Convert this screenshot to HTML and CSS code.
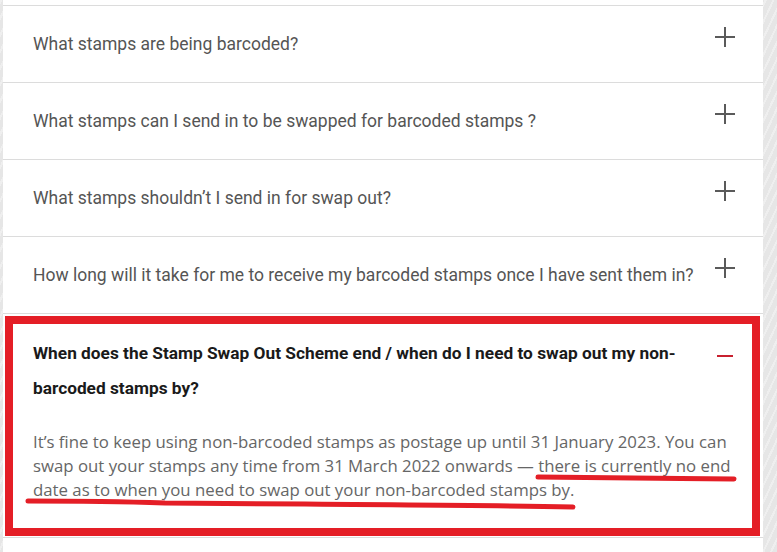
FILE: index.html
```html
<!DOCTYPE html>
<html lang="en">
<head>
    <meta charset="UTF-8">
    <meta name="viewport" content="width=device-width, initial-scale=1.0">
    <title>Stamp Swap Out FAQ</title>
    <link rel="stylesheet" href="styles.css">
</head>
<body>
    <div class="faq">
        <div class="faq-item">
            <span class="faq-question">What stamps are being barcoded?</span>
            <span class="faq-plus"></span>
        </div>
        <div class="faq-item">
            <span class="faq-question">What stamps can I send in to be swapped for barcoded stamps ?</span>
            <span class="faq-plus"></span>
        </div>
        <div class="faq-item">
            <span class="faq-question">What stamps shouldn’t I send in for swap out?</span>
            <span class="faq-plus"></span>
        </div>
        <div class="faq-item">
            <span class="faq-question">How long will it take for me to receive my barcoded stamps once I have sent them in?</span>
            <span class="faq-plus"></span>
        </div>
        <div class="faq-item open">
            <div class="faq-box">
                <div class="faq-head">
                    <span class="faq-title">When does the Stamp Swap Out Scheme end / when do I need to swap out my non-barcoded stamps by?</span>
                    <span class="faq-minus"></span>
                </div>
                <p class="faq-answer">It’s fine to keep using non-barcoded stamps as postage up until 31 January 2023. You can swap out your stamps any time from 31 March 2022 onwards — there is currently no end date as to when you need to swap out your non-barcoded stamps by.</p>
                <!-- hand drawn marks on top of the text -->
                <svg class="marks" width="757" height="222" viewBox="0 0 757 222">
                    <path d="M533 161 C 580 162, 660 162, 729 163" />
                    <path d="M23 185 C 80 185, 130 186, 160 187 L 300 188 C 400 189, 480 189, 568 191" />
                </svg>
            </div>
        </div>
        <div class="faq-item last"></div>
    </div>
</body>
</html>
```

FILE: styles.css
```css
body {
    margin: 0;
    height: 552px;
    overflow: hidden;
    background-color: #e6e6e6;
    background-image: repeating-linear-gradient(115deg, rgba(255,255,255,0.35) 0 2px, transparent 2px 7px);
    font-family: "Roboto", sans-serif;
}
.faq {
    margin-left: 3px;
    width: 760px;
    padding-top: 5px;
    background: #fff;
    min-height: 547px;
}
.faq-item {
    border-top: 1px solid #dcdcdc;
    display: flex;
    align-items: flex-start;
    padding: 21px 28px 26px 30px;
}
.faq-question {
    flex: 1;
    margin-top: 5px;
    font-size: 17.5px;
    line-height: 24px;
    color: #555;
}
.faq-plus {
    position: relative;
    width: 20px;
    height: 20px;
}
.faq-plus::before, .faq-plus::after {
    content: "";
    position: absolute;
    background: #5a5a5a;
}
.faq-plus::before {
    left: 0;
    top: 9px;
    width: 20px;
    height: 2px;
}
.faq-plus::after {
    left: 9px;
    top: 0;
    width: 2px;
    height: 20px;
}
.faq-item.open {
    display: block;
    padding: 2px 3px 1px 2px;
}
.faq-box {
    position: relative;
    border: 8px solid #e41e26;
    padding: 12px 19px 26px 20px;
}
.faq-head {
    display: flex;
    align-items: flex-start;
}
.faq-title {
    flex: 1;
    font-weight: bold;
    font-size: 17.3px;
    line-height: 35px;
    color: #1a1a1a;
    padding-right: 10px;
}
.faq-minus {
    width: 16px;
    height: 2px;
    margin-top: 19px;
    background: #c8202f;
}
.faq-answer {
    margin: 24px 0 0;
    font-family: "Open Sans", sans-serif;
    font-size: 16.8px;
    line-height: 24px;
    color: #666;
}
.marks {
    position: absolute;
    left: -8px;
    top: -8px;
    pointer-events: none;
}
.marks path {
    fill: none;
    stroke: #e41e26;
    stroke-width: 5;
    stroke-linecap: round;
}
.faq-item.last {
    padding: 0;
    height: 20px;
}
```
